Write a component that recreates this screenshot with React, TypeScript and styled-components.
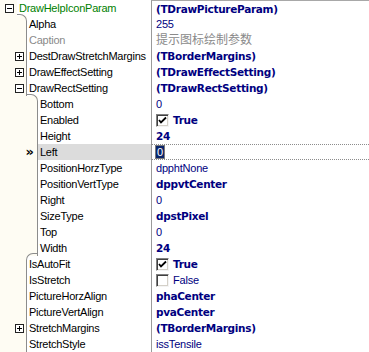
import styled, { createGlobalStyle, css } from 'styled-components';

const colors = {
  cream: '#fefcf3',
  line: '#8c8c8c',
  divider: '#9a9a9a',
  navy: '#000080',
  grey: '#8a8a8a',
  green: '#008000',
  selected: '#dcdcdc',
  editBg: '#0a246a',
};

const gutterWidths = [16, 26, 37];

type Row = {
  name: string;
  value: string;
  level: number;
  expand?: '+' | '-';
  bold?: boolean;
  check?: boolean;
  checked?: boolean;
  dim?: boolean;
  green?: boolean;
  selected?: boolean;
  bracket?: 'open' | 'close';
  topRule?: boolean;
};

const rows: Row[] = [
  { name: 'DrawHelpIconParam', value: '(TDrawPictureParam)', level: 0, expand: '-', bold: true, green: true, topRule: true },
  { name: 'Alpha', value: '255', level: 1, bracket: 'open' },
  { name: 'Caption', value: '提示图标绘制参数', level: 1, dim: true },
  { name: 'DestDrawStretchMargins', value: '(TBorderMargins)', level: 1, expand: '+', bold: true },
  { name: 'DrawEffectSetting', value: '(TDrawEffectSetting)', level: 1, expand: '+', bold: true },
  { name: 'DrawRectSetting', value: '(TDrawRectSetting)', level: 1, expand: '-', bold: true },
  { name: 'Bottom', value: '0', level: 2, bracket: 'open' },
  { name: 'Enabled', value: 'True', level: 2, check: true, checked: true, bold: true },
  { name: 'Height', value: '24', level: 2, bold: true },
  { name: 'Left', value: '0', level: 2, selected: true },
  { name: 'PositionHorzType', value: 'dpphtNone', level: 2 },
  { name: 'PositionVertType', value: 'dppvtCenter', level: 2, bold: true },
  { name: 'Right', value: '0', level: 2 },
  { name: 'SizeType', value: 'dpstPixel', level: 2, bold: true },
  { name: 'Top', value: '0', level: 2 },
  { name: 'Width', value: '24', level: 2, bold: true },
  { name: 'IsAutoFit', value: 'True', level: 1, check: true, checked: true, bold: true, bracket: 'close' },
  { name: 'IsStretch', value: 'False', level: 1, check: true },
  { name: 'PictureHorzAlign', value: 'phaCenter', level: 1, bold: true },
  { name: 'PictureVertAlign', value: 'pvaCenter', level: 1, bold: true },
  { name: 'StretchMargins', value: '(TBorderMargins)', level: 1, expand: '+', bold: true },
  { name: 'StretchStyle', value: 'issTensile', level: 1 },
];

export default function App() {
  return (
    <>
      <GlobalStyle />
      <Inspector>
        {rows.map((row, i) => {
          const prev = rows[i - 1];
          const from = prev ? gutterWidths[prev.level] : 0;
          return (
            <RowLine key={row.name}>
              <NamePane>
                <Gutter
                  $w={gutterWidths[row.level]}
                  $line={row.level > 0}
                  $bracket={row.bracket}
                  $from={row.bracket === 'open' && prev?.level === 0 ? 17 : from}
                >
                  {row.selected && <Marker>»</Marker>}
                  {row.expand && <ExpandBox $open={row.expand === '-'} />}
                </Gutter>
                <NameCell $selected={row.selected} $dim={row.dim} $green={row.green}>
                  {row.name}
                </NameCell>
              </NamePane>
              <ValueCell $selected={row.selected} $topRule={row.topRule}>
                {row.check && (
                  <CheckBox>
                    {row.checked && (
                      <svg width="9" height="9" viewBox="0 0 9 9">
                        <path d="M1 4 L3 6.5 L8 1.5" fill="none" stroke="#000" strokeWidth="1.8" />
                      </svg>
                    )}
                  </CheckBox>
                )}
                {row.selected ? (
                  <EditText>{row.value}</EditText>
                ) : (
                  <ValueText $bold={row.bold} $dim={row.dim}>
                    {row.value}
                  </ValueText>
                )}
              </ValueCell>
            </RowLine>
          );
        })}
      </Inspector>
    </>
  );
}

const GlobalStyle = createGlobalStyle`
  html, body {
    margin: 0;
    padding: 0;
    background: #fff;
  }
  body {
    font-family: 'Liberation Sans', Arial, sans-serif;
    font-size: 11px;
  }
`;

const Inspector = styled.div`
  display: flex;
  flex-direction: column;
  width: 369px;
  height: 352px;
  overflow: hidden;
  background: #fff;
`;

const RowLine = styled.div`
  display: flex;
  height: 16px;
`;

const NamePane = styled.div`
  display: flex;
  width: 151px;
  flex: none;
`;

const Gutter = styled.div<{
  $w: number;
  $line: boolean;
  $bracket?: 'open' | 'close';
  $from: number;
}>`
  position: relative;
  flex: none;
  display: flex;
  align-items: center;
  justify-content: flex-end;
  padding-right: 1px;
  box-sizing: border-box;
  background: ${colors.cream};
  border-right: 1px solid
    ${(p) => (p.$line && !p.$bracket ? colors.line : 'transparent')};
  width: ${(p) => p.$w + 1}px;

  ${(p) =>
    p.$bracket === 'open' &&
    css`
      &::before {
        content: '';
        position: absolute;
        top: -2px;
        bottom: 0;
        right: -1px;
        width: ${p.$w - p.$from}px;
        border-top: 1px solid ${colors.line};
        border-right: 1px solid ${colors.line};
        border-top-right-radius: 7px;
      }
    `}

  ${(p) =>
    p.$bracket === 'close' &&
    css`
      &::before {
        content: '';
        position: absolute;
        top: -3px;
        bottom: 0;
        left: ${p.$w}px;
        width: ${p.$from - p.$w}px;
        border-top: 1px solid ${colors.line};
        border-left: 1px solid ${colors.line};
        border-top-left-radius: 7px;
      }
    `}
`;

const ExpandBox = styled.span<{ $open: boolean }>`
  position: relative;
  width: 9px;
  height: 9px;
  box-sizing: border-box;
  border: 1px solid #222;
  background: #fff;
  margin-right: 1px;

  &::before {
    content: '';
    position: absolute;
    left: 1px;
    top: 3px;
    width: 5px;
    height: 1px;
    background: #000;
  }

  ${(p) =>
    !p.$open &&
    css`
      &::after {
        content: '';
        position: absolute;
        left: 3px;
        top: 1px;
        width: 1px;
        height: 5px;
        background: #000;
      }
    `}
`;

const Marker = styled.span`
  font-family: 'DejaVu Sans', sans-serif;
  font-size: 13px;
  font-weight: bold;
  line-height: 16px;
  margin-right: 2px;
  color: #000;
`;

const NameCell = styled.div<{ $selected?: boolean; $dim?: boolean; $green?: boolean }>`
  flex: 1;
  min-width: 0;
  padding-left: 2px;
  line-height: 16px;
  letter-spacing: -0.25px;
  white-space: nowrap;
  overflow: hidden;
  background: ${(p) => (p.$selected ? colors.selected : '#fff')};
  color: ${(p) => (p.$green ? colors.green : p.$dim ? colors.grey : '#000')};
`;

const ValueCell = styled.div<{ $selected?: boolean; $topRule?: boolean }>`
  flex: 1;
  display: flex;
  align-items: center;
  gap: 4px;
  box-sizing: border-box;
  padding-left: 4px;
  border-left: 1px solid ${colors.divider};
  white-space: nowrap;
  overflow: hidden;
  ${(p) =>
    p.$topRule &&
    css`
      border-top: 1px solid #a8a8a8;
    `}
  ${(p) =>
    p.$selected &&
    css`
      border-top: 1px dotted ${colors.line};
      border-bottom: 1px dotted ${colors.line};
    `}
`;

const ValueText = styled.span<{ $bold?: boolean; $dim?: boolean }>`
  color: ${(p) => (p.$dim ? colors.grey : colors.navy)};
  font-family: ${(p) =>
    p.$dim
      ? "'Liberation Sans', 'Noto Sans CJK SC', sans-serif"
      : p.$bold
        ? "'DejaVu Sans', sans-serif"
        : "'Liberation Sans', sans-serif"};
  font-size: ${(p) => (p.$dim ? '12px' : p.$bold ? '10.5px' : '11px')};
  letter-spacing: ${(p) => (p.$bold ? '-0.3px' : p.$dim ? '0' : '-0.2px')};
  font-weight: ${(p) => (p.$bold ? 'bold' : 'normal')};
  line-height: 16px;
`;

const EditText = styled.span`
  background: ${colors.editBg};
  color: #fff;
  line-height: 12px;
  padding: 0 1px;
  outline: 1px solid #7a7a7a;
`;

const CheckBox = styled.span`
  flex: none;
  width: 13px;
  height: 13px;
  box-sizing: border-box;
  display: flex;
  align-items: center;
  justify-content: center;
  background: #fff;
  border: 1px solid;
  border-color: #808080 #f4f4f4 #f4f4f4 #808080;
  box-shadow: inset 1px 1px 0 #404040, inset -1px -1px 0 #d4d0c8;
`;
